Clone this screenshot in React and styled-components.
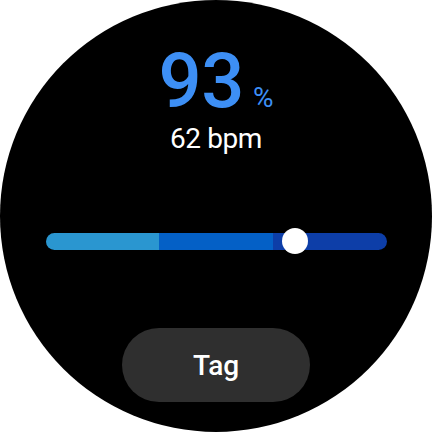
import React from "react";
import styled, { createGlobalStyle } from "styled-components";

const Global = createGlobalStyle`
  html, body { margin: 0; padding: 0; background: #ffffff; }
  body { font-family: Roboto, "Noto Sans", sans-serif; }
`;

const Face = styled.div`
  width: 432px;
  height: 432px;
  border-radius: 50%;
  background: #000;
  display: flex;
  flex-direction: column;
  align-items: center;
  padding-top: 43px;
  box-sizing: border-box;
  overflow: hidden;
`;

const ValueRow = styled.div`
  display: flex;
  align-items: baseline;
  color: #3d8ff5;
  line-height: 76px;
  height: 76px;
`;

const Big = styled.span`
  font-size: 76px;
  font-weight: 500;
  letter-spacing: -0.5px;
`;

const Unit = styled.span`
  font-size: 28px;
  margin-left: 9px;
`;

const Bpm = styled.div`
  margin-top: 7px;
  color: #fff;
  font-size: 28px;
  line-height: 26px;
  letter-spacing: -0.4px;
`;

const Slider = styled.div`
  position: relative;
  margin-top: 76px;
  width: 341px;
  height: 26px;
  display: flex;
  align-items: center;
`;

const Track = styled.div`
  width: 100%;
  height: 17px;
  border-radius: 9px;
  overflow: hidden;
  display: flex;
`;

const Segment = styled.div`
  flex: 1;
  background: ${(p) => p.$color};
`;

const Thumb = styled.div`
  position: absolute;
  top: 0;
  width: 26px;
  height: 26px;
  margin-left: -13px;
  border-radius: 50%;
  background: #fff;
`;

const TagButton = styled.button`
  margin-top: 74px;
  width: 188px;
  height: 74px;
  border: none;
  border-radius: 37px;
  background: #2f2f2f;
  color: #fff;
  font-family: Roboto, "Noto Sans", sans-serif;
  font-size: 28px;
  font-weight: 500;
  padding: 0;
  cursor: pointer;
`;

export default function App() {
  const value = 0.733;
  return (
    <>
      <Global />
      <Face>
        <ValueRow>
          <Big>93</Big>
          <Unit>%</Unit>
        </ValueRow>
        <Bpm>62 bpm</Bpm>
        <Slider>
          <Track>
            <Segment $color="#2a96d0" />
            <Segment $color="#0460c6" />
            <Segment $color="#0d3ea8" />
          </Track>
          <Thumb style={{ left: `${value * 100}%` }} />
        </Slider>
        <TagButton>Tag</TagButton>
      </Face>
    </>
  );
}
